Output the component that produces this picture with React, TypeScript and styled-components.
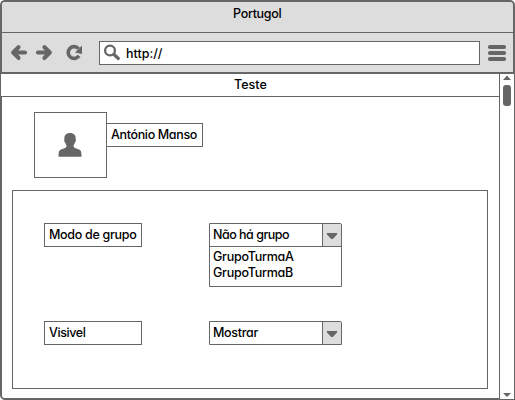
import React from "react";
import styled, { createGlobalStyle } from "styled-components";

const ink = "#666";
const chrome = "#ddd";

const Global = createGlobalStyle`
  * { box-sizing: border-box; }
  body { margin: 0; background: #fff; overflow: hidden; }
`;

const Label = styled.span<{ $ls?: number }>`
  display: block;
  font: 500 12.5px/16px Inter, Lato, sans-serif;
  font-feature-settings: "cv11" 1, "calt" 0;
  letter-spacing: ${(p) => p.$ls ?? 0}px;
  color: #000;
  white-space: pre;
`;

const Window = styled.div`
  width: 515px;
  height: 400px;
  display: flex;
  flex-direction: column;
  border: 2px solid ${ink};
  border-radius: 5px 5px 0 5px;
  border-right: 0;
  border-bottom: 0;
  background: #fff;
`;

const Header = styled.header`
  height: 72px;
  flex: none;
  background: ${chrome};
  border-right: 2px solid ${ink};
  border-bottom: 2px solid ${ink};
  border-top-left-radius: 3px;
  border-top-right-radius: 4px;
`;

const TitleBar = styled.div`
  height: 31px;
  padding-top: 4px;
  padding-left: 231px;
  border-bottom: 1px solid ${ink};
`;

const Toolbar = styled.div`
  height: 39px;
  display: flex;
  align-items: flex-start;
`;

const NavIcons = styled.svg`
  width: 97px;
  height: 39px;
  display: block;
`;

const AddressBar = styled.div`
  width: 381px;
  height: 24px;
  margin-top: 8px;
  display: flex;
  border: 1px solid ${ink};
  background: #fff;
`;

const SearchIcon = styled.svg`
  width: 26px;
  height: 22px;
`;

const AddressText = styled.div`
  padding-top: 4px;
`;

const MenuIcon = styled.svg`
  width: 33px;
  height: 39px;
`;

const Body = styled.div`
  flex: 1;
  display: flex;
  min-height: 0;
`;

const Page = styled.main`
  width: 497px;
  border-bottom: 2px solid ${ink};
  border-bottom-left-radius: 3px;
`;

const PageTitle = styled.div`
  height: 23px;
  margin-left: -1px;
  padding: 3px 0 0 233px;
  border-bottom: 1px solid ${ink};
  background: #fff;
`;

const Profile = styled.div`
  display: flex;
  align-items: flex-start;
  margin: 15px 0 0 32px;
`;

const Avatar = styled.div`
  width: 73px;
  height: 66px;
  border: 1px solid ${ink};
  svg { display: block; }
`;

const Field = styled.div<{ $w: number }>`
  width: ${(p) => p.$w}px;
  height: 24px;
  border: 1px solid ${ink};
  padding: 3px 0 0 4px;
`;

const NameField = styled(Field)`
  margin: 11px 0 0 -1px;
`;

const Panel = styled.section`
  width: 476px;
  height: 199px;
  margin: 12px 0 0 10px;
  padding: 32px 0 0 31px;
  border: 1px solid ${ink};
  display: grid;
  grid-template-columns: 98px 133px;
  grid-template-rows: 98px 24px;
  column-gap: 67px;
  align-items: start;
`;

const Select = styled.div`
  border: 1px solid ${ink};
  border-radius: 0 2px 0 0;
`;

const SelectValue = styled.div`
  height: 22px;
  display: flex;
  justify-content: space-between;
  padding-left: 3px;
`;

const ValueText = styled.div`
  padding-top: 3px;
`;

const ArrowButton = styled.div`
  width: 19px;
  border-left: 1px solid ${ink};
  background: ${chrome};
  svg { display: block; }
`;

const Options = styled.div`
  height: 40px;
  border-top: 1px solid ${ink};
  padding: 2px 0 0 3px;
`;

const ScrollBar = styled.div`
  width: 16px;
  display: flex;
  flex-direction: column;
  justify-content: space-between;
  border: 1px solid ${ink};
  border-top: 0;
`;

const ScrollThumb = styled.div`
  width: 8px;
  height: 21px;
  margin: 5px 0 0 3px;
  border-radius: 3px;
  background: ${ink};
`;

const ScrollArrow = styled.svg`
  display: block;
  width: 14px;
  height: 6px;
`;

function Dropdown({ value, ls, options }: { value: string; ls: number; options?: string[] }) {
  return (
    <Select>
      <SelectValue>
        <ValueText><Label $ls={ls}>{value}</Label></ValueText>
        <ArrowButton>
          <svg width="18" height="22" fill={ink}><path d="M4.300 9h9.400q1 .4.3 1.500L10.300 14.500q-1.300 1.200-2.600 0L4 10.500q-.7-1.100.3-1.500z" /></svg>
        </ArrowButton>
      </SelectValue>
      {options && (
        <Options>
          {options.map((o) => <Label key={o} $ls={-0.25}>{o}</Label>)}
        </Options>
      )}
    </Select>
  );
}

export default function App() {
  return (
    <>
      <Global />
      <Window>
        <Header>
          <TitleBar><Label $ls={-0.3}>Portugol</Label></TitleBar>
          <Toolbar>
            <NavIcons viewBox="2 33 97 39" fill="none" stroke={ink} strokeWidth="4.200" strokeLinecap="round" strokeLinejoin="round">
              <path d="M18.500 47.300L13.200 52.500l5.300 5.400M14 52.500h11" />
              <path d="M44.500 47.300L49.800 52.500l-5.300 5.400M49 52.500H38" />
              <path strokeWidth="3.600" strokeLinecap="butt" d="M78.500 48.600A5.900 5.900 0 1 0 79 55.800" />
              <path d="M82 45.500v8.500l-7-1.500z" fill={ink} stroke="none" />
            </NavIcons>
            <AddressBar>
              <SearchIcon viewBox="100 42 26 22" fill="none" stroke={ink}>
                <circle cx="110" cy="50.500" r="4.900" strokeWidth="2.300" />
                <path d="M114 54.500l4.300 4" strokeWidth="3.200" strokeLinecap="round" />
              </SearchIcon>
              <AddressText><Label $ls={0}>http://</Label></AddressText>
            </AddressBar>
            <MenuIcon viewBox="480 33 33 39" fill={ink}>
              <rect x="488" y="45" width="18" height="4" rx="1.800" />
              <rect x="488" y="51" width="18" height="4" rx="1.800" />
              <rect x="488" y="57" width="18" height="4" rx="1.800" />
            </MenuIcon>
          </Toolbar>
        </Header>
        <Body>
          <Page>
            <PageTitle><Label $ls={0}>Teste</Label></PageTitle>
            <Profile>
              <Avatar>
                <svg width="71" height="64" viewBox="35 113 71 64" fill={ink}>
                  <path d="M70 133c4 0 6 2.400 5.700 6 .5 1.800 0 3-.8 3.600-.4 1.500-.9 2.300-1.400 2.900 0 1.500.5 2 1.500 2.400l4 1.700c2 .9 2.500 2.200 2.600 7.100H58.500c.1-4.900.6-6.200 2.600-7.100l4-1.700c1-.4 1.500-.9 1.500-2.400-.5-.6-1-1.400-1.400-2.900-.8-.6-1.300-1.800-.8-3.600-.3-3.600 1.600-6 5.600-6z" />
                </svg>
              </Avatar>
              <NameField $w={97}><Label $ls={-0.35}>António Manso</Label></NameField>
            </Profile>
            <Panel>
              <Field $w={98}><Label $ls={-0.3}>Modo de grupo</Label></Field>
              <Dropdown value="Não há grupo" ls={-0.5} options={["GrupoTurmaA", "GrupoTurmaB"]} />
              <Field $w={98}><Label $ls={-0.4}>Visivel</Label></Field>
              <Dropdown value="Mostrar" ls={-0.3} />
            </Panel>
          </Page>
          <ScrollBar>
            <div>
              <ScrollArrow viewBox="0 0 14 6" fill={ink}><path d="M7 1.500L11 6H3z" /></ScrollArrow>
              <ScrollThumb />
            </div>
            <ScrollArrow viewBox="0 0 14 6" fill={ink}><path d="M3 0h8L7 4z" /></ScrollArrow>
          </ScrollBar>
        </Body>
      </Window>
    </>
  );
}
